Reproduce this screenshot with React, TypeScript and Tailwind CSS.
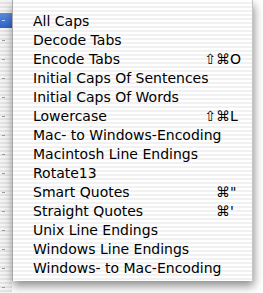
import React from "react";

const items: { label: string; mods?: string; key?: string }[] = [
  { label: "All Caps" },
  { label: "Decode Tabs" },
  { label: "Encode Tabs", mods: "⇧⌘", key: "O" },
  { label: "Initial Caps Of Sentences" },
  { label: "Initial Caps Of Words" },
  { label: "Lowercase", mods: "⇧⌘", key: "L" },
  { label: "Mac- to Windows-Encoding" },
  { label: "Macintosh Line Endings" },
  { label: "Rotate13" },
  { label: "Smart Quotes", mods: "⌘", key: "\"" },
  { label: "Straight Quotes", mods: "⌘", key: "'" },
  { label: "Unix Line Endings" },
  { label: "Windows Line Endings" },
  { label: "Windows- to Mac-Encoding" },
];

const marks = [20, 40, 59, 78, 97, 116, 135, 154, 173, 192, 211, 230, 249, 268, 287];

export default function App() {
  return (
    <div className="w-[263px] h-[293px] overflow-hidden bg-white flex font-['DejaVu_Sans',sans-serif]">
      <div className="relative w-[12px] h-full shrink-0 bg-[repeating-linear-gradient(to_bottom,#f4f4f4_0px,#f4f4f4_2px,#e4e4e4_2px,#e4e4e4_4px)]">
        <div className="absolute left-0 right-0 top-[13px] h-[15px] bg-[linear-gradient(to_bottom,#5a8ae0,#2f63c8)]" />
        {marks.map((y, i) => (
          <div
            key={y}
            className={
              i === 0
                ? "absolute left-[2px] w-[3px] h-[1px] bg-[#c8d8f4]"
                : "absolute left-[2px] w-[3px] h-[1px] bg-[#9a9a9a]"
            }
            style={{ top: y }}
          />
        ))}
      </div>
      <div className="relative shrink-0 w-[241px] self-start">
        <div className="border-l border-l-[#a8a8a8] border-r border-r-[#c4c4c4] pt-[12px] pb-[3px] pl-[20px] pr-[10px] text-[14px] text-black bg-[repeating-linear-gradient(to_bottom,#ffffff_0px,#ffffff_2px,#f1f1f1_2px,#f1f1f1_4px)] shadow-[1px_5px_9px_rgba(0,0,0,0.45)]">
          {items.map((it) => (
            <div key={it.label} className="flex items-center justify-between h-[19px] leading-[19px] whitespace-nowrap">
              <span>{it.label}</span>
              {it.key ? (
                <span className="flex">
                  <span>{it.mods}</span>
                  <span className="w-[12px]">{it.key}</span>
                </span>
              ) : null}
            </div>
          ))}
        </div>
      </div>
    </div>
  );
}
